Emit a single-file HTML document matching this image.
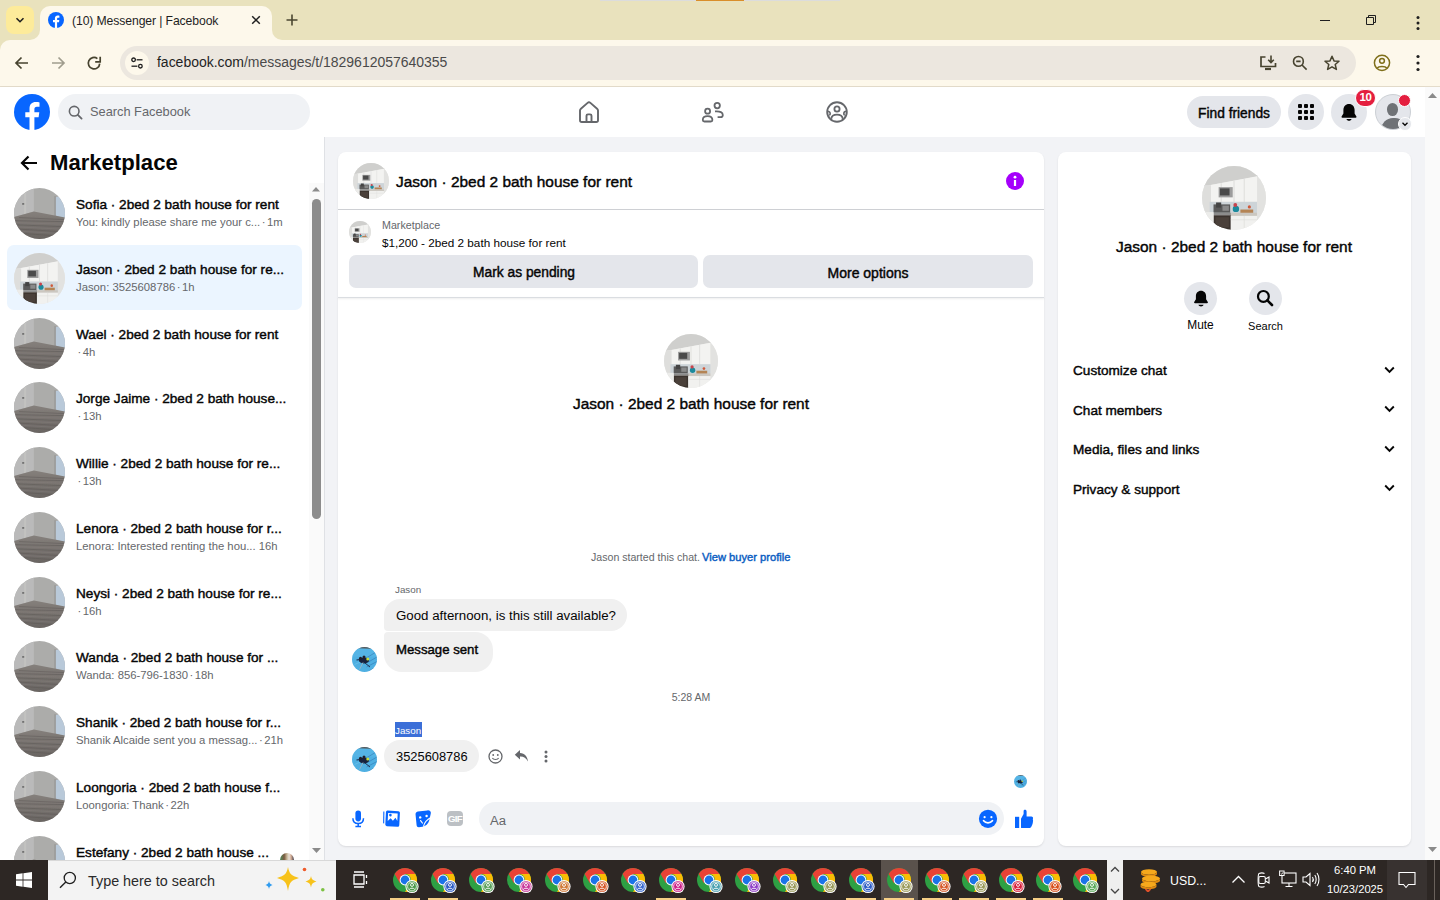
<!DOCTYPE html>
<html><head><meta charset="utf-8">
<style>
*{box-sizing:border-box;margin:0;padding:0}
html,body{width:1440px;height:900px;overflow:hidden;font-family:"Liberation Sans",sans-serif;background:#fff;color:#050505}
.abs{position:absolute}
#tabs{left:0;top:0;width:1440px;height:50px;background:#e9e2bd}
#toolbar{left:0;top:40px;width:1440px;height:47px;background:#fdf8eb;border-bottom:1px solid #e4dccb;border-top-left-radius:10px}
#fbhead{left:0;top:87px;width:1425px;height:50px;background:#fff;box-shadow:0 1px 2px rgba(0,0,0,0.12)}
#page{left:0;top:137px;width:1425px;height:723px;background:#f2f3f6}
#pscroll{left:1425px;top:87px;width:15px;height:773px;background:#fafafa}
#side{left:0;top:137px;width:325px;height:723px;background:#fff;border-right:1px solid #dfe1e5}
#chat{left:338px;top:152px;width:706px;height:694px;background:#fff;border-radius:8px;box-shadow:0 1px 2px rgba(0,0,0,0.1)}
#info{left:1058px;top:152px;width:353px;height:694px;background:#fff;border-radius:8px;box-shadow:0 1px 2px rgba(0,0,0,0.1)}
.tt{left:76px;font-size:13.62px;line-height:1;font-weight:400;-webkit-text-stroke-width:0.42px;color:#050505;white-space:nowrap}
.st{left:76px;font-size:11.3px;color:#65676b;white-space:pre}
#taskbar{left:0;top:860px;width:1440px;height:40px;background:#2d2724}
</style></head><body>
<svg width="0" height="0" style="position:absolute">
<defs>
<clipPath id="cc"><circle cx="50" cy="50" r="50"/></clipPath>
<symbol id="room" viewBox="0 0 100 100">
<defs><linearGradient id="flg" x1="0" y1="0" x2="0" y2="1"><stop offset="0" stop-color="#85807c"/><stop offset="1" stop-color="#6a6562"/></linearGradient></defs>
<g clip-path="url(#cc)">
<rect width="100" height="100" fill="#acacaa"/>
<polygon points="0,0 39,0 39,46 0,57" fill="#bababa"/>
<rect x="20" y="0" width="4" height="52" fill="#c2c2c0"/>
<polygon points="81,18 100,14 100,60 81,54" fill="#b9c9d9"/>
<rect x="79" y="16" width="3" height="40" fill="#9a9a98"/>
<polygon points="0,57 39,46 100,58 100,100 0,100" fill="url(#flg)"/>
<path d="M0 64 L100 66 M0 72 L100 76 M0 80 L100 86 M0 88 L100 95 M10 58 L100 62" stroke="#5a5552" stroke-width="1.6" opacity="0.55"/>
<path d="M0 68 L100 71 M0 76 L100 81 M0 84 L100 90" stroke="#8c8783" stroke-width="1.2" opacity="0.5"/>
<rect x="16" y="30" width="4" height="2.5" fill="#555"/>
</g>
</symbol>
<symbol id="kitchen" viewBox="0 0 100 100">
<g clip-path="url(#cc)">
<rect width="100" height="100" fill="#e9e9e7"/>
<polygon points="0,0 100,0 100,14 0,32" fill="#cfcfcd"/>
<polygon points="12,30 86,16 86,56 12,56" fill="#f3f3f1"/>
<path d="M30 27 V56 M50 23 V56 M66 20 V56" stroke="#d6d6d4" stroke-width="1.2"/>
<rect x="26" y="33" width="22" height="16" fill="#9c9c9c"/>
<rect x="28" y="35" width="15" height="11" fill="#4a4a4a"/>
<rect x="0" y="30" width="14" height="70" fill="#dededc"/>
<rect x="12" y="56" width="76" height="18" fill="#cdd4d8"/>
<rect x="18" y="60" width="26" height="13" fill="#5a5a5a"/>
<rect x="22" y="57" width="8" height="8" fill="#444"/>
<rect x="32" y="62" width="10" height="8" fill="#8a8a8a"/>
<circle cx="53" cy="67" r="5" fill="#1b8a9c"/>
<circle cx="52" cy="61" r="3" fill="#c8434c"/>
<rect x="60" y="68" width="20" height="6" fill="#b48454"/>
<circle cx="74" cy="64" r="2.5" fill="#d05a3a"/>
<rect x="44" y="73" width="44" height="5" fill="#cbc7c0"/>
<rect x="18" y="73" width="27" height="4" fill="#8c8c8c"/>
<rect x="18" y="77" width="27" height="25" fill="#3b332e"/>
<rect x="21" y="80" width="21" height="16" fill="#4a403a"/>
<rect x="45" y="78" width="43" height="24" fill="#f1f1ef"/>
<path d="M66 78 V100 M45 84 H88" stroke="#dcdcda" stroke-width="1"/>
<rect x="86" y="14" width="14" height="88" fill="#e2e2e0"/>
<rect x="0" y="72" width="18" height="30" fill="#ececea"/>
</g>
</symbol>
<symbol id="pool" viewBox="0 0 100 100">
<g clip-path="url(#cc)">
<rect width="100" height="100" fill="#4fb0e2"/>
<polygon points="0,0 100,0 100,8 0,4" fill="#5a5a5a"/>
<rect x="0" y="8" width="100" height="30" fill="#5ab8e8" opacity="0.6"/>
<path d="M55 45 L100 18 M62 62 L100 40 M58 80 L100 58 M70 95 L100 78" stroke="#2b6aa8" stroke-width="3.5" opacity="0.55"/>
<path d="M10 70 L45 55" stroke="#7ac8ee" stroke-width="3" opacity="0.7"/>
<ellipse cx="48" cy="54" rx="20" ry="12" fill="#17223f"/>
<circle cx="34" cy="45" r="6" fill="#1f1f2c"/>
<circle cx="48" cy="40" r="6" fill="#23202a"/>
<circle cx="63" cy="48" r="6" fill="#c9dc3a"/>
<path d="M44 62 L30 90" stroke="#8fb3c4" stroke-width="4"/>
<path d="M18 52 L34 50" stroke="#17223f" stroke-width="5"/>
<path d="M52 64 L72 80" stroke="#203050" stroke-width="4"/>
</g>
</symbol>
</defs></svg>

<div id="tabs" class="abs">
  <div class="abs" style="left:6px;top:6px;width:28px;height:28px;border-radius:8px;background:#fdeb9a;z-index:2"></div>
  <svg class="abs" style="left:14px;top:14px;z-index:3" width="12" height="12" viewBox="0 0 12 12"><path d="M2.5 4.2 L6 7.7 L9.5 4.2" fill="none" stroke="#1f1f1f" stroke-width="1.6"/></svg>
  <div class="abs" style="left:40px;top:6px;width:232px;height:34px;background:#fdf8eb;border-radius:10px 10px 0 0"></div>
  <div class="abs" style="left:30px;top:30px;width:10px;height:10px;background:#fdf8eb"></div><div class="abs" style="left:30px;top:29px;width:10px;height:11px;background:#e9e2bd;border-bottom-right-radius:10px"></div>
  <div class="abs" style="left:272px;top:30px;width:10px;height:10px;background:#fdf8eb"></div><div class="abs" style="left:272px;top:29px;width:10px;height:11px;background:#e9e2bd;border-bottom-left-radius:10px"></div>
  <svg class="abs" style="left:48px;top:12px" width="16" height="16" viewBox="0 0 16 16"><circle cx="8" cy="8" r="8" fill="#0866ff"/><path d="M9.1 16 V10.3 H11 L11.3 8.1 H9.1 V6.8 C9.1 6.1 9.4 5.7 10.2 5.7 H11.4 V3.7 C11.1 3.7 10.4 3.6 9.7 3.6 C8 3.6 6.9 4.6 6.9 6.5 V8.1 H5 V10.3 H6.9 V16 Z" fill="#fff"/></svg>
  <div class="abs" style="left:72px;top:13.5px;font-size:12.2px;color:#1f1f1f;white-space:nowrap;letter-spacing:-0.1px">(10) Messenger | Facebook</div>
  <svg class="abs" style="left:250px;top:14px" width="12" height="12" viewBox="0 0 12 12"><path d="M2.2 2.2 L9.8 9.8 M9.8 2.2 L2.2 9.8" stroke="#1f1f1f" stroke-width="1.5"/></svg>
  <svg class="abs" style="left:285px;top:13px" width="14" height="14" viewBox="0 0 14 14"><path d="M7 1.5 V12.5 M1.5 7 H12.5" stroke="#4a4630" stroke-width="1.6"/></svg>
  <svg class="abs" style="left:1318px;top:13px" width="14" height="14" viewBox="0 0 14 14"><path d="M2 7.5 H12" stroke="#1f1f1f" stroke-width="1"/></svg>
  <svg class="abs" style="left:1364px;top:13px" width="14" height="14" viewBox="0 0 14 14"><path d="M2.5 4.5 H9.5 V11.5 H2.5 Z M4.5 4.5 V2.5 H11.5 V9.5 H9.5" fill="none" stroke="#1f1f1f" stroke-width="1"/></svg>
  <svg class="abs" style="left:1410px;top:13px" width="16" height="20" viewBox="0 0 16 20"><circle cx="8" cy="4.5" r="1.5" fill="#1f1f1f"/><circle cx="8" cy="10" r="1.5" fill="#1f1f1f"/><circle cx="8" cy="15.5" r="1.5" fill="#1f1f1f"/></svg>
  <div class="abs" style="left:600px;top:0;width:240px;height:1px;background:#dcdcdc"></div>
  <div class="abs" style="left:696px;top:0;width:48px;height:1px;background:#d98e2b"></div>
</div>
<div id="toolbar" class="abs">
  <svg class="abs" style="left:13px;top:14px" width="18" height="18" viewBox="0 0 18 18"><path d="M15 9 H3.5 M8.5 3.5 L3 9 L8.5 14.5" fill="none" stroke="#47432f" stroke-width="1.7"/></svg>
  <svg class="abs" style="left:49px;top:14px" width="18" height="18" viewBox="0 0 18 18"><path d="M3 9 H14.5 M9.5 3.5 L15 9 L9.5 14.5" fill="none" stroke="#a09d8e" stroke-width="1.7"/></svg>
  <svg class="abs" style="left:85px;top:14px" width="18" height="18" viewBox="0 0 18 18"><path d="M14.7 9.6 A5.7 5.7 0 1 1 12.4 4.6" fill="none" stroke="#47432f" stroke-width="1.7"/><path d="M15.2 2.8 V7.9 H10.2" fill="none" stroke="#47432f" stroke-width="1.7"/></svg>
  <div class="abs" style="left:120px;top:6px;width:1236px;height:34px;border-radius:17px;background:#ece7df"></div>
  <div class="abs" style="left:125px;top:11px;width:24px;height:24px;border-radius:12px;background:#fdf8eb"></div>
  <svg class="abs" style="left:130px;top:16px" width="14" height="14" viewBox="0 0 14 14"><circle cx="3.6" cy="3.8" r="1.8" fill="none" stroke="#1f1f1f" stroke-width="1.3"/><path d="M6.6 3.8 H12.5" stroke="#1f1f1f" stroke-width="1.3"/><circle cx="10.4" cy="10.2" r="1.8" fill="none" stroke="#1f1f1f" stroke-width="1.3"/><path d="M1.5 10.2 H7.4" stroke="#1f1f1f" stroke-width="1.3"/></svg>
  <div class="abs" style="left:157px;top:14px;font-size:14px;color:#1f1f1f;white-space:nowrap;letter-spacing:-0.02px"><span>facebook.com</span><span style="color:#4a4a4a">/messages/t/1829612057640355</span></div>
  <svg class="abs" style="left:1258px;top:14px" width="20" height="18" viewBox="0 0 20 18"><path d="M7.5 3 H3 V12.5 H17.5 V9" fill="none" stroke="#47432f" stroke-width="1.7"/><path d="M7 15 H13" stroke="#47432f" stroke-width="2.2"/><path d="M13 1.5 V8.5 M10.2 5.8 L13 8.6 L15.8 5.8" fill="none" stroke="#47432f" stroke-width="1.6"/></svg>
  <svg class="abs" style="left:1291px;top:14px" width="18" height="18" viewBox="0 0 18 18"><circle cx="7.4" cy="7.4" r="4.9" fill="none" stroke="#47432f" stroke-width="1.6"/><path d="M11 11 L15.6 15.6 M5.2 7.4 H9.6" stroke="#47432f" stroke-width="1.6"/></svg>
  <svg class="abs" style="left:1322px;top:13px" width="20" height="20" viewBox="0 0 20 20"><path d="M10 3.2 L12 7.9 L17 8.3 L13.2 11.5 L14.4 16.4 L10 13.8 L5.6 16.4 L6.8 11.5 L3 8.3 L8 7.9 Z" fill="none" stroke="#47432f" stroke-width="1.5" stroke-linejoin="round"/></svg>
  <svg class="abs" style="left:1371px;top:12px" width="22" height="22" viewBox="0 0 22 22"><circle cx="11" cy="10.8" r="7.6" fill="none" stroke="#7f6f1a" stroke-width="1.5"/><circle cx="11" cy="8.8" r="2.4" fill="none" stroke="#7f6f1a" stroke-width="1.5"/><path d="M6.3 16.2 C7.6 13.8 14.4 13.8 15.7 16.2" fill="none" stroke="#7f6f1a" stroke-width="1.5"/></svg>
  <svg class="abs" style="left:1410px;top:13px" width="16" height="20" viewBox="0 0 16 20"><circle cx="8" cy="3.5" r="1.6" fill="#1f1f1f"/><circle cx="8" cy="10" r="1.6" fill="#1f1f1f"/><circle cx="8" cy="16.5" r="1.6" fill="#1f1f1f"/></svg>
</div>
<div id="fbhead" class="abs">
  <svg class="abs" style="left:14px;top:7px" width="36" height="36" viewBox="0 0 36 36"><circle cx="18" cy="18" r="18" fill="#0866ff"/><path d="M20.4 36 V23.2 H24.6 L25.3 18.2 H20.4 V15.3 C20.4 13.8 21 12.8 22.9 12.8 H25.5 V8.4 C24.9 8.3 23.3 8.1 21.8 8.1 C17.9 8.1 15.5 10.4 15.5 14.6 V18.2 H11.3 V23.2 H15.5 V36 Z" fill="#fff"/></svg>
  <div class="abs" style="left:58px;top:7px;width:252px;height:36px;border-radius:18px;background:#f0f2f5"></div>
  <svg class="abs" style="left:68px;top:18px" width="15" height="15" viewBox="0 0 15 15"><circle cx="6.2" cy="6.2" r="4.8" fill="none" stroke="#65676b" stroke-width="1.6"/><path d="M9.8 9.8 L13.6 13.6" stroke="#65676b" stroke-width="1.8" stroke-linecap="round"/></svg>
  <div class="abs" style="left:90px;top:17px;font-size:12.8px;color:#65676b;white-space:nowrap">Search Facebook</div>
  <svg class="abs" style="left:578px;top:14px" width="22" height="22" viewBox="0 0 22 22"><path d="M2 9.5 C2 8.8 2.3 8.2 2.9 7.7 L9.6 1.9 C10.4 1.2 11.6 1.2 12.4 1.9 L19.1 7.7 C19.7 8.2 20 8.8 20 9.5 V19.2 C20 20.2 19.2 21 18.2 21 H3.8 C2.8 21 2 20.2 2 19.2 Z" fill="none" stroke="#65676b" stroke-width="1.9"/><path d="M8.5 21 V14.8 C8.5 14 9.1 13.4 9.9 13.4 H12.1 C12.9 13.4 13.5 14 13.5 14.8 V21" fill="none" stroke="#65676b" stroke-width="1.9"/></svg>
  <svg class="abs" style="left:701px;top:14px" width="24" height="22" viewBox="0 0 24 22"><circle cx="6.6" cy="10.2" r="2.5" fill="none" stroke="#65676b" stroke-width="1.8"/><path d="M1.8 19 C1.8 16.3 3.4 15.2 6.6 15.2 C9.8 15.2 11.4 16.3 11.4 19 C11.4 20 10.8 20.5 9.8 20.5 H3.4 C2.4 20.5 1.8 20 1.8 19 Z" fill="none" stroke="#65676b" stroke-width="1.8"/><circle cx="16.2" cy="4.6" r="2.7" fill="none" stroke="#65676b" stroke-width="1.8"/><path d="M14 10.4 C19.4 10 21.8 11.4 21.8 14 C21.8 15.6 21 16.2 19.6 16.2 H16.6" fill="none" stroke="#65676b" stroke-width="1.8"/></svg>
  <svg class="abs" style="left:826px;top:14px" width="22" height="22" viewBox="0 0 22 22"><circle cx="11" cy="11" r="9.8" fill="none" stroke="#65676b" stroke-width="1.9"/><circle cx="11" cy="8" r="2.6" fill="none" stroke="#65676b" stroke-width="1.8"/><path d="M5.2 17.8 C5.6 14.8 7.6 13.6 11 13.6 C14.4 13.6 16.4 14.8 16.8 17.8" fill="none" stroke="#65676b" stroke-width="1.8"/><path d="M1.5 10.3 C2.8 10.3 4.2 11.2 4.2 12.7 C4.2 13.4 3.8 14 3.3 14.3 M20.5 10.3 C19.2 10.3 17.8 11.2 17.8 12.7 C17.8 13.4 18.2 14 18.7 14.3" fill="none" stroke="#65676b" stroke-width="1.6"/></svg>
  <div class="abs" style="left:1187px;top:9px;width:94px;height:32px;border-radius:16px;background:#e4e6eb"></div>
  <div class="abs" style="left:1187px;top:11px;width:94px;height:32px;line-height:32px;text-align:center;font-size:13.78px;font-weight:400;-webkit-text-stroke-width:0.42px;color:#050505">Find friends</div>
  <div class="abs" style="left:1288px;top:7px;width:36px;height:36px;border-radius:18px;background:#e4e6eb"></div>
  <svg class="abs" style="left:1297px;top:16px" width="18" height="18" viewBox="0 0 18 18"><g fill="#050505"><rect x="1" y="1" width="4" height="4" rx="1"/><rect x="7" y="1" width="4" height="4" rx="1"/><rect x="13" y="1" width="4" height="4" rx="1"/><rect x="1" y="7" width="4" height="4" rx="1"/><rect x="7" y="7" width="4" height="4" rx="1"/><rect x="13" y="7" width="4" height="4" rx="1"/><rect x="1" y="13" width="4" height="4" rx="1"/><rect x="7" y="13" width="4" height="4" rx="1"/><rect x="13" y="13" width="4" height="4" rx="1"/></g></svg>
  <div class="abs" style="left:1331px;top:7px;width:36px;height:36px;border-radius:18px;background:#e4e6eb"></div>
  <svg class="abs" style="left:1340px;top:16px" width="18" height="18" viewBox="0 0 18 18"><path d="M9 1 C5.6 1 3.4 3.6 3.4 7 V10.6 L1.6 13.6 C1.3 14.2 1.6 14.8 2.3 14.8 H15.7 C16.4 14.8 16.7 14.2 16.4 13.6 L14.6 10.6 V7 C14.6 3.6 12.4 1 9 1 Z" fill="#050505"/><path d="M6.4 16 C6.8 17.2 7.8 17.8 9 17.8 C10.2 17.8 11.2 17.2 11.6 16 Z" fill="#050505"/></svg>
  <div class="abs" style="left:1355px;top:2px;width:21px;height:18px;border-radius:9px;background:#e41e3f;border:1.5px solid #fff;color:#fff;font-size:11.5px;font-weight:bold;text-align:center;line-height:15px;letter-spacing:-0.5px">10</div>
  <div class="abs" style="left:1375px;top:7px;width:36px;height:36px;border-radius:18px;background:#e4e6eb;overflow:hidden;border:1px solid #ccd0d5">
    <div class="abs" style="left:11.4px;top:8px;width:11px;height:12.7px;border-radius:50%;background:#6f7276"></div>
    <div class="abs" style="left:4.7px;top:23px;width:26px;height:20px;border-radius:12px 12px 0 0;background:#6f7276"></div>
  </div>
  <div class="abs" style="left:1398px;top:7px;width:13px;height:13px;border-radius:7px;background:#e41e3f;border:1.5px solid #fff"></div>
  <div class="abs" style="left:1398px;top:30px;width:14px;height:14px;border-radius:7px;background:#e4e6eb;border:1.5px solid #fff"></div>
  <svg class="abs" style="left:1401px;top:33px" width="8" height="8" viewBox="0 0 8 8"><path d="M1.5 2.8 L4 5.3 L6.5 2.8" fill="none" stroke="#050505" stroke-width="1.3"/></svg>
</div>
<div id="page" class="abs"></div>
<div id="pscroll" class="abs"></div>
<svg class="abs" style="left:1427px;top:91px" width="11" height="8" viewBox="0 0 11 8"><path d="M1 7 L5.5 2 L10 7 Z" fill="#8a8a8a"/></svg>
<svg class="abs" style="left:1427px;top:846px" width="11" height="8" viewBox="0 0 11 8"><path d="M1 1 L5.5 6 L10 1 Z" fill="#8a8a8a"/></svg>
<div id="side" class="abs">
<svg class="abs" style="left:20px;top:18px" width="18" height="16" viewBox="0 0 18 16"><path d="M17 8 H2.5 M8.5 1.5 L2 8 L8.5 14.5" fill="none" stroke="#050505" stroke-width="2.2"/></svg>
<div class="abs" style="left:50px;top:13px;font-size:22.1px;font-weight:bold;color:#050505;white-space:nowrap;letter-spacing:0px">Marketplace</div>
<div class="abs" style="left:7px;top:108px;width:295px;height:65px;border-radius:7px;background:#ebf5ff"></div>
<svg class="abs" style="left:14px;top:51.00px" width="51" height="51"><use href="#room"/></svg>
<div class="abs tt" style="top:61.00px">Sofia · 2bed 2 bath house for rent</div>
<div class="abs st" style="top:79.00px">You: kindly please share me your c...<span style="margin:0 1.5px">·</span>1m</div>
<svg class="abs" style="left:14px;top:115.75px" width="51" height="51"><use href="#kitchen"/></svg>
<div class="abs tt" style="top:125.75px">Jason · 2bed 2 bath house for re...</div>
<div class="abs st" style="top:143.75px">Jason: 3525608786<span style="margin:0 1.5px">·</span>1h</div>
<svg class="abs" style="left:14px;top:180.50px" width="51" height="51"><use href="#room"/></svg>
<div class="abs tt" style="top:190.50px">Wael · 2bed 2 bath house for rent</div>
<div class="abs st" style="top:208.50px"><span style="margin:0 1.5px">·</span>4h</div>
<svg class="abs" style="left:14px;top:245.25px" width="51" height="51"><use href="#room"/></svg>
<div class="abs tt" style="top:255.25px">Jorge Jaime · 2bed 2 bath house...</div>
<div class="abs st" style="top:273.25px"><span style="margin:0 1.5px">·</span>13h</div>
<svg class="abs" style="left:14px;top:310.00px" width="51" height="51"><use href="#room"/></svg>
<div class="abs tt" style="top:320.00px">Willie · 2bed 2 bath house for re...</div>
<div class="abs st" style="top:338.00px"><span style="margin:0 1.5px">·</span>13h</div>
<svg class="abs" style="left:14px;top:374.75px" width="51" height="51"><use href="#room"/></svg>
<div class="abs tt" style="top:384.75px">Lenora · 2bed 2 bath house for r...</div>
<div class="abs st" style="top:402.75px">Lenora: Interested renting the hou... 16h</div>
<svg class="abs" style="left:14px;top:439.50px" width="51" height="51"><use href="#room"/></svg>
<div class="abs tt" style="top:449.50px">Neysi · 2bed 2 bath house for re...</div>
<div class="abs st" style="top:467.50px"><span style="margin:0 1.5px">·</span>16h</div>
<svg class="abs" style="left:14px;top:504.25px" width="51" height="51"><use href="#room"/></svg>
<div class="abs tt" style="top:514.25px">Wanda · 2bed 2 bath house for ...</div>
<div class="abs st" style="top:532.25px">Wanda: 856-796-1830<span style="margin:0 1.5px">·</span>18h</div>
<svg class="abs" style="left:14px;top:569.00px" width="51" height="51"><use href="#room"/></svg>
<div class="abs tt" style="top:579.00px">Shanik · 2bed 2 bath house for r...</div>
<div class="abs st" style="top:597.00px">Shanik Alcaide sent you a messag...<span style="margin:0 1.5px">·</span>21h</div>
<svg class="abs" style="left:14px;top:633.75px" width="51" height="51"><use href="#room"/></svg>
<div class="abs tt" style="top:643.75px">Loongoria · 2bed 2 bath house f...</div>
<div class="abs st" style="top:661.75px">Loongoria: Thank<span style="margin:0 1.5px">·</span>22h</div>
<svg class="abs" style="left:14px;top:698.50px" width="51" height="51"><use href="#room"/></svg>
<div class="abs tt" style="top:708.50px">Estefany · 2bed 2 bath house ...</div>
<div class="abs" style="left:309px;top:46px;width:15px;height:677px;background:#fafafa"></div>
<svg class="abs" style="left:311px;top:710px" width="11" height="7" viewBox="0 0 11 7"><path d="M1 1 L5.5 6 L10 1 Z" fill="#8a8a8a"/></svg>
<div class="abs" style="left:280px;top:716px;width:14px;height:14px;border-radius:7px;overflow:hidden;background:linear-gradient(90deg,#4a8a5a 0,#7a5a40 30%,#c8b89a 50%,#e8e0d8 65%,#d0a890 80%,#3a3a4a 100%)"></div>
<svg class="abs" style="left:311px;top:48px" width="10" height="8" viewBox="0 0 10 8"><path d="M1 6.5 L5 2 L9 6.5 Z" fill="#8c8c8c"/></svg>
<div class="abs" style="left:312px;top:62px;width:9px;height:320px;border-radius:5px;background:#8c8c8c"></div>
</div>
<div id="chat" class="abs"></div>
<div id="info" class="abs"></div>
<svg class="abs" style="left:353px;top:163px" width="36" height="36"><use href="#kitchen"/></svg>
<div class="abs" style="left:396px;top:173.93px;font-size:15.44px;line-height:1;font-weight:400;-webkit-text-stroke-width:0.42px;color:#050505;white-space:pre;">Jason · 2bed 2 bath house for rent</div>
<svg class="abs" style="left:1006px;top:172px" width="18" height="18" viewBox="0 0 18 18"><circle cx="9" cy="9" r="9" fill="#a500fb"/><circle cx="9" cy="5.2" r="1.4" fill="#fff"/><rect x="7.9" y="8" width="2.2" height="6" fill="#fff"/></svg>
<div class="abs" style="left:338px;top:209px;width:706px;height:1px;background:#ced0d4"></div>
<svg class="abs" style="left:349px;top:221px" width="22" height="22"><use href="#kitchen"/></svg>
<div class="abs" style="left:382px;top:219.94px;font-size:10.7px;line-height:1;font-weight:400;color:#65676b;white-space:pre;">Marketplace</div>
<div class="abs" style="left:382px;top:237.08px;font-size:11.72px;line-height:1;font-weight:400;color:#050505;white-space:pre;">$1,200 - 2bed 2 bath house for rent</div>
<div class="abs" style="left:349px;top:255px;width:349px;height:33px;border-radius:7px;background:#e4e6eb"></div>
<div class="abs" style="left:224px;width:600px;text-align:center;top:266.31px;font-size:13.8px;line-height:1;font-weight:400;-webkit-text-stroke-width:0.42px;color:#050505;white-space:pre;">Mark as pending</div>
<div class="abs" style="left:703px;top:255px;width:330px;height:33px;border-radius:7px;background:#e4e6eb"></div>
<div class="abs" style="left:568px;width:600px;text-align:center;top:266.15px;font-size:14.0px;line-height:1;font-weight:400;-webkit-text-stroke-width:0.42px;color:#050505;white-space:pre;">More options</div>
<div class="abs" style="left:338px;top:297px;width:706px;height:1px;background:#dadde1;box-shadow:0 1px 2px rgba(0,0,0,0.1)"></div>
<svg class="abs" style="left:664px;top:334px" width="54" height="54"><use href="#kitchen"/></svg>
<div class="abs" style="left:391px;width:600px;text-align:center;top:395.93px;font-size:15.44px;line-height:1;font-weight:400;-webkit-text-stroke-width:0.42px;color:#050505;white-space:pre;">Jason · 2bed 2 bath house for rent</div>
<div class="abs" style="left:591px;top:552.03px;font-size:10.6px;line-height:1;font-weight:400;color:#65676b;white-space:pre;">Jason started this chat. </div>
<div class="abs" style="left:702px;top:551.55px;font-size:11.17px;line-height:1;font-weight:400;-webkit-text-stroke-width:0.42px;color:#0a5dc2;white-space:pre;">View buyer profile</div>
<div class="abs" style="left:395px;top:584.70px;font-size:9.8px;line-height:1;font-weight:400;color:#65676b;white-space:pre;">Jason</div>
<div class="abs" style="left:384px;top:599px;width:243px;height:32px;border-radius:16px 16px 16px 4px;background:#f0f0f0"></div>
<div class="abs" style="left:396px;top:608.75px;font-size:13.29px;line-height:1;font-weight:400;color:#050505;white-space:pre;">Good afternoon, is this still available?</div>
<div class="abs" style="left:384px;top:632px;width:109px;height:40px;border-radius:4px 18px 18px 18px;background:#f0f0f0"></div>
<div class="abs" style="left:396px;top:642.83px;font-size:13.19px;line-height:1;font-weight:400;-webkit-text-stroke-width:0.42px;color:#050505;white-space:pre;">Message sent</div>
<svg class="abs" style="left:352px;top:647px" width="25" height="25"><use href="#pool"/></svg>
<div class="abs" style="left:391px;width:600px;text-align:center;top:692.09px;font-size:10.52px;line-height:1;font-weight:400;color:#65676b;white-space:pre;">5:28 AM</div>
<div class="abs" style="left:395px;top:722px;width:27px;height:15px;background:#3b6fd8"></div>
<div class="abs" style="left:395px;top:725.70px;font-size:9.8px;line-height:1;font-weight:400;color:#ffffff;white-space:pre;">Jason</div>
<div class="abs" style="left:384px;top:740px;width:95px;height:32px;border-radius:16px;background:#f0f0f0"></div>
<div class="abs" style="left:396px;top:751.09px;font-size:12.89px;line-height:1;font-weight:400;color:#050505;white-space:pre;">3525608786</div>
<svg class="abs" style="left:352px;top:747px" width="25" height="25"><use href="#pool"/></svg>
<svg class="abs" style="left:488px;top:749px" width="15" height="15" viewBox="0 0 15 15"><circle cx="7.5" cy="7.5" r="6.5" fill="none" stroke="#65676b" stroke-width="1.3"/><circle cx="5.2" cy="6" r="0.9" fill="#65676b"/><circle cx="9.8" cy="6" r="0.9" fill="#65676b"/><path d="M4.4 9 C5.4 11 9.6 11 10.6 9" fill="none" stroke="#65676b" stroke-width="1.2"/></svg>
<svg class="abs" style="left:514px;top:749px" width="15" height="14" viewBox="0 0 15 14"><path d="M6 1 L0.8 5.8 L6 10.6 V7.6 C9.5 7.4 12 8.8 14 12.5 C13.5 7.5 10.8 4.2 6 3.9 Z" fill="#65676b"/></svg>
<svg class="abs" style="left:543px;top:750px" width="6" height="13" viewBox="0 0 6 13"><circle cx="3" cy="2" r="1.5" fill="#65676b"/><circle cx="3" cy="6.5" r="1.5" fill="#65676b"/><circle cx="3" cy="11" r="1.5" fill="#65676b"/></svg>
<svg class="abs" style="left:1014px;top:775px" width="13" height="13"><use href="#pool"/></svg>
<svg class="abs" style="left:351px;top:810px" width="14" height="18" viewBox="0 0 14 18"><rect x="4.4" y="0.6" width="5.6" height="10.8" rx="2.8" fill="#0866ff"/><path d="M1.9 8.2 C1.9 11.6 4.2 13.6 7.2 13.6 C10.2 13.6 12.5 11.6 12.5 8.2" fill="none" stroke="#0866ff" stroke-width="1.5"/><path d="M7.2 13.6 V16.4 M4.4 16.6 H10" stroke="#0866ff" stroke-width="1.5"/></svg>
<svg class="abs" style="left:382px;top:810px" width="18" height="18" viewBox="0 0 18 18"><path d="M1.3 1.6 L2.4 1.4 L2.2 13.4 L1.1 13.2 Z" fill="#0866ff"/><g transform="rotate(3 10 9)"><rect x="3.6" y="0.8" width="14" height="15.6" rx="1.6" fill="#0866ff"/><path d="M5.8 3.2 H15.4 V10.6 L13.4 7.6 L11 10.8 L8.6 8.2 L5.8 11.2 Z" fill="#fff"/><circle cx="8.2" cy="5.2" r="1.3" fill="#0866ff"/></g></svg>
<svg class="abs" style="left:414px;top:810px" width="18" height="18" viewBox="0 0 18 18"><path d="M1.6 5 C1.2 3.2 2.2 2 3.8 1.6 L13.4 0.4 C15.6 0.1 17.4 1.6 16.8 3.6 L15.2 10.4 C14.4 13.6 11.6 16.2 8.4 16.8 L5 17.2 C3.6 17.3 2.8 16.4 2.6 15.2 Z" fill="#0866ff"/><circle cx="6.2" cy="7.4" r="1.2" fill="#fff"/><circle cx="12.6" cy="6" r="1.2" fill="#fff"/><path d="M6.6 10.6 L8.4 13" stroke="#fff" stroke-width="1.2" stroke-linecap="round"/><path d="M9.4 16.6 C10.4 12.8 13 9.6 17 7.6" fill="none" stroke="#fff" stroke-width="1.1"/></svg>
<div class="abs" style="left:447px;top:811px;width:16px;height:15px;border-radius:4px;background:#bcc0c4"></div>
<div class="abs" style="left:445px;top:812.5px;width:20px;text-align:center;font-size:9.6px;font-weight:bold;line-height:12px;color:#fff;letter-spacing:-0.7px">GIF</div>
<div class="abs" style="left:479px;top:802px;width:525px;height:33px;border-radius:17px;background:#f0f2f5"></div>
<div class="abs" style="left:490px;top:813.93px;font-size:13.08px;line-height:1;font-weight:400;color:#65676b;white-space:pre;">Aa</div>
<svg class="abs" style="left:978px;top:809px" width="20" height="20" viewBox="0 0 20 20"><circle cx="10" cy="9.8" r="9.1" fill="#0866ff"/><circle cx="6.6" cy="8.2" r="1.1" fill="#fff"/><circle cx="13.4" cy="8.2" r="1.1" fill="#fff"/><path d="M5.6 11.8 C7.8 14.6 12.2 14.6 14.4 11.8" fill="none" stroke="#fff" stroke-width="1.8" stroke-linecap="round"/></svg>
<svg class="abs" style="left:1014px;top:809px" width="20" height="20" viewBox="0 0 20 20"><rect x="1" y="7.8" width="4.2" height="11.2" fill="#0866ff"/><path d="M7 18.4 V9.8 L9.6 5 V2.2 C9.6 1.3 10.2 0.8 11 0.8 C11.9 0.8 12.6 1.4 12.6 2.6 V7.4 H17.4 C18.4 7.4 19.2 8.2 19 9.2 L18.8 10.8 C19.2 11.4 19.2 12.4 18.8 13 C19 13.6 18.9 14.4 18.4 14.9 C18.4 15.6 18.2 16.4 17.6 16.9 C17.2 18.2 16.4 19 15 19 H7.8 C7.3 19 7 18.8 7 18.4 Z" fill="#0866ff"/></svg>
<svg class="abs" style="left:1202px;top:166px" width="64" height="64"><use href="#kitchen"/></svg>
<div class="abs" style="left:934px;width:600px;text-align:center;top:238.93px;font-size:15.44px;line-height:1;font-weight:400;-webkit-text-stroke-width:0.42px;color:#050505;white-space:pre;">Jason · 2bed 2 bath house for rent</div>
<div class="abs" style="left:1184px;top:282px;width:33px;height:33px;border-radius:17px;background:#e4e6eb"></div>
<svg class="abs" style="left:1193px;top:290px" width="16" height="17" viewBox="0 0 16 17"><path d="M8 0.8 C4.9 0.8 2.9 3.2 2.9 6.2 V9.2 L1.2 12 C0.9 12.6 1.2 13.2 1.9 13.2 H14.1 C14.8 13.2 15.1 12.6 14.8 12 L13.1 9.2 V6.2 C13.1 3.2 11.1 0.8 8 0.8 Z" fill="#050505"/><path d="M5.4 14.8 C5.8 15.8 6.8 16.4 8 16.4 C9.2 16.4 10.2 15.8 10.6 14.8 Z" fill="#050505"/></svg>
<div class="abs" style="left:1249px;top:282px;width:33px;height:33px;border-radius:17px;background:#e4e6eb"></div>
<svg class="abs" style="left:1256px;top:289px" width="18" height="18" viewBox="0 0 18 18"><circle cx="7.4" cy="7.4" r="5.4" fill="none" stroke="#050505" stroke-width="2.2"/><path d="M11.4 11.4 L16 16" stroke="#050505" stroke-width="2.6" stroke-linecap="round"/></svg>
<div class="abs" style="left:900.5px;width:600px;text-align:center;top:319.91px;font-size:11.92px;line-height:1;font-weight:400;color:#050505;white-space:pre;">Mute</div>
<div class="abs" style="left:965.5px;width:600px;text-align:center;top:320.69px;font-size:11.0px;line-height:1;font-weight:400;color:#050505;white-space:pre;">Search</div>
<div class="abs" style="left:1073px;top:364.49px;font-size:13.6px;line-height:1;font-weight:400;-webkit-text-stroke-width:0.42px;color:#050505;white-space:pre;">Customize chat</div>
<svg class="abs" style="left:1384px;top:365.5px" width="11" height="8" viewBox="0 0 11 8"><path d="M1.2 1.5 L5.5 5.8 L9.8 1.5" fill="none" stroke="#050505" stroke-width="1.9"/></svg>
<div class="abs" style="left:1073px;top:403.99px;font-size:13.6px;line-height:1;font-weight:400;-webkit-text-stroke-width:0.42px;color:#050505;white-space:pre;">Chat members</div>
<svg class="abs" style="left:1384px;top:405.0px" width="11" height="8" viewBox="0 0 11 8"><path d="M1.2 1.5 L5.5 5.8 L9.8 1.5" fill="none" stroke="#050505" stroke-width="1.9"/></svg>
<div class="abs" style="left:1073px;top:443.49px;font-size:13.6px;line-height:1;font-weight:400;-webkit-text-stroke-width:0.42px;color:#050505;white-space:pre;">Media, files and links</div>
<svg class="abs" style="left:1384px;top:444.5px" width="11" height="8" viewBox="0 0 11 8"><path d="M1.2 1.5 L5.5 5.8 L9.8 1.5" fill="none" stroke="#050505" stroke-width="1.9"/></svg>
<div class="abs" style="left:1073px;top:482.99px;font-size:13.6px;line-height:1;font-weight:400;-webkit-text-stroke-width:0.42px;color:#050505;white-space:pre;">Privacy &amp; support</div>
<svg class="abs" style="left:1384px;top:484.0px" width="11" height="8" viewBox="0 0 11 8"><path d="M1.2 1.5 L5.5 5.8 L9.8 1.5" fill="none" stroke="#050505" stroke-width="1.9"/></svg>
<div id="taskbar" class="abs"></div>
<svg class="abs" style="left:16px;top:872px" width="16" height="16" viewBox="0 0 16 16"><g fill="#fff"><path d="M0 2.2 L6.6 1.3 V7.6 H0 Z"/><path d="M7.4 1.2 L16 0 V7.6 H7.4 Z"/><path d="M0 8.4 H6.6 V14.7 L0 13.8 Z"/><path d="M7.4 8.4 H16 V16 L7.4 14.8 Z"/></g></svg>
<div class="abs" style="left:48px;top:860px;width:288px;height:40px;background:#f3f3f3;border-top:1px solid #d8d8d8"></div>
<svg class="abs" style="left:59px;top:871px" width="18" height="18" viewBox="0 0 18 18"><circle cx="10.8" cy="7" r="5.6" fill="none" stroke="#1f1f1f" stroke-width="1.3"/><path d="M6.8 11 L1 16.8" stroke="#1f1f1f" stroke-width="1.4"/></svg>
<div class="abs" style="left:88px;top:873.84px;font-size:14.37px;line-height:1;font-weight:400;color:#2a2a2a;white-space:pre;">Type here to search</div>
<svg class="abs" style="left:262px;top:864px" width="66" height="30" viewBox="0 0 66 30"><path d="M26 3 C27.5 10 29 11.5 37 14 C29 16.5 27.5 18 26 27 C24.5 18 23 16.5 15 14 C23 11.5 24.5 10 26 3 Z" fill="#f7c21a"/><path d="M49 12 C49.8 15.5 50.5 16.2 54.5 17.5 C50.5 18.8 49.8 19.5 49 23.5 C48.2 19.5 47.5 18.8 43.5 17.5 C47.5 16.2 48.2 15.5 49 12 Z" fill="#f7c21a"/><path d="M7 17 C7.5 19.5 8 20 10.5 21 C8 22 7.5 22.5 7 25 C6.5 22.5 6 22 3.5 21 C6 20 6.5 19.5 7 17 Z" fill="#2f9bef"/><circle cx="42.5" cy="5.5" r="1.8" fill="#ef5a2a"/><circle cx="60.8" cy="25.8" r="1.8" fill="#7cc142"/></svg>
<svg class="abs" style="left:351px;top:871px" width="18" height="17" viewBox="0 0 18 17"><path d="M3 1 H13 M3 16 H13 M3 4 H13 V13 H3 Z M15.5 4 V7 M15.5 10 V13" fill="none" stroke="#fff" stroke-width="1.3"/></svg>
<svg class="abs" style="left:392px;top:866px" width="28" height="28" viewBox="0 0 28 28"><circle cx="13" cy="14" r="12" fill="#2ea043"/><path d="M13 2 A12 12 0 0 0 2.6 8 L7.8 17 L13 8 H23.4 A12 12 0 0 0 13 2 Z" fill="#e94235"/><path d="M23.4 8 A12 12 0 0 1 13 26 L18.2 17 A6 6 0 0 0 13 8 Z" fill="#fbbc04"/><circle cx="13" cy="14" r="5.4" fill="#fff"/><circle cx="13" cy="14" r="4.4" fill="#1a73e8"/><circle cx="20" cy="20.5" r="6.6" fill="#fff"/><circle cx="20" cy="20.5" r="5.6" fill="#4a9a4a"/><circle cx="20" cy="20.5" r="4.4" fill="none" stroke="#fff" stroke-width="0.9" opacity="0.85"/><circle cx="20" cy="18.9" r="1.5" fill="none" stroke="#fff" stroke-width="0.9"/><path d="M17.3 23.4 C17.9 21.8 22.1 21.8 22.7 23.4" fill="none" stroke="#fff" stroke-width="0.9"/></svg>
<div class="abs" style="left:390px;top:898px;width:30px;height:2px;background:#f6cf86"></div>
<svg class="abs" style="left:430px;top:866px" width="28" height="28" viewBox="0 0 28 28"><circle cx="13" cy="14" r="12" fill="#2ea043"/><path d="M13 2 A12 12 0 0 0 2.6 8 L7.8 17 L13 8 H23.4 A12 12 0 0 0 13 2 Z" fill="#e94235"/><path d="M23.4 8 A12 12 0 0 1 13 26 L18.2 17 A6 6 0 0 0 13 8 Z" fill="#fbbc04"/><circle cx="13" cy="14" r="5.4" fill="#fff"/><circle cx="13" cy="14" r="4.4" fill="#1a73e8"/><circle cx="20" cy="20.5" r="6.6" fill="#fff"/><circle cx="20" cy="20.5" r="5.6" fill="#2c5cc5"/><circle cx="20" cy="20.5" r="4.4" fill="none" stroke="#fff" stroke-width="0.9" opacity="0.85"/><circle cx="20" cy="18.9" r="1.5" fill="none" stroke="#fff" stroke-width="0.9"/><path d="M17.3 23.4 C17.9 21.8 22.1 21.8 22.7 23.4" fill="none" stroke="#fff" stroke-width="0.9"/></svg>
<div class="abs" style="left:428px;top:898px;width:30px;height:2px;background:#f6cf86"></div>
<svg class="abs" style="left:468px;top:866px" width="28" height="28" viewBox="0 0 28 28"><circle cx="13" cy="14" r="12" fill="#2ea043"/><path d="M13 2 A12 12 0 0 0 2.6 8 L7.8 17 L13 8 H23.4 A12 12 0 0 0 13 2 Z" fill="#e94235"/><path d="M23.4 8 A12 12 0 0 1 13 26 L18.2 17 A6 6 0 0 0 13 8 Z" fill="#fbbc04"/><circle cx="13" cy="14" r="5.4" fill="#fff"/><circle cx="13" cy="14" r="4.4" fill="#1a73e8"/><circle cx="20" cy="20.5" r="6.6" fill="#fff"/><circle cx="20" cy="20.5" r="5.6" fill="#5aa05a"/><circle cx="20" cy="20.5" r="4.4" fill="none" stroke="#fff" stroke-width="0.9" opacity="0.85"/><circle cx="20" cy="18.9" r="1.5" fill="none" stroke="#fff" stroke-width="0.9"/><path d="M17.3 23.4 C17.9 21.8 22.1 21.8 22.7 23.4" fill="none" stroke="#fff" stroke-width="0.9"/></svg>
<svg class="abs" style="left:506px;top:866px" width="28" height="28" viewBox="0 0 28 28"><circle cx="13" cy="14" r="12" fill="#2ea043"/><path d="M13 2 A12 12 0 0 0 2.6 8 L7.8 17 L13 8 H23.4 A12 12 0 0 0 13 2 Z" fill="#e94235"/><path d="M23.4 8 A12 12 0 0 1 13 26 L18.2 17 A6 6 0 0 0 13 8 Z" fill="#fbbc04"/><circle cx="13" cy="14" r="5.4" fill="#fff"/><circle cx="13" cy="14" r="4.4" fill="#1a73e8"/><circle cx="20" cy="20.5" r="6.6" fill="#fff"/><circle cx="20" cy="20.5" r="5.6" fill="#c8389a"/><circle cx="20" cy="20.5" r="4.4" fill="none" stroke="#fff" stroke-width="0.9" opacity="0.85"/><circle cx="20" cy="18.9" r="1.5" fill="none" stroke="#fff" stroke-width="0.9"/><path d="M17.3 23.4 C17.9 21.8 22.1 21.8 22.7 23.4" fill="none" stroke="#fff" stroke-width="0.9"/></svg>
<svg class="abs" style="left:544px;top:866px" width="28" height="28" viewBox="0 0 28 28"><circle cx="13" cy="14" r="12" fill="#2ea043"/><path d="M13 2 A12 12 0 0 0 2.6 8 L7.8 17 L13 8 H23.4 A12 12 0 0 0 13 2 Z" fill="#e94235"/><path d="M23.4 8 A12 12 0 0 1 13 26 L18.2 17 A6 6 0 0 0 13 8 Z" fill="#fbbc04"/><circle cx="13" cy="14" r="5.4" fill="#fff"/><circle cx="13" cy="14" r="4.4" fill="#1a73e8"/><circle cx="20" cy="20.5" r="6.6" fill="#fff"/><circle cx="20" cy="20.5" r="5.6" fill="#d07a38"/><circle cx="20" cy="20.5" r="4.4" fill="none" stroke="#fff" stroke-width="0.9" opacity="0.85"/><circle cx="20" cy="18.9" r="1.5" fill="none" stroke="#fff" stroke-width="0.9"/><path d="M17.3 23.4 C17.9 21.8 22.1 21.8 22.7 23.4" fill="none" stroke="#fff" stroke-width="0.9"/></svg>
<svg class="abs" style="left:582px;top:866px" width="28" height="28" viewBox="0 0 28 28"><circle cx="13" cy="14" r="12" fill="#2ea043"/><path d="M13 2 A12 12 0 0 0 2.6 8 L7.8 17 L13 8 H23.4 A12 12 0 0 0 13 2 Z" fill="#e94235"/><path d="M23.4 8 A12 12 0 0 1 13 26 L18.2 17 A6 6 0 0 0 13 8 Z" fill="#fbbc04"/><circle cx="13" cy="14" r="5.4" fill="#fff"/><circle cx="13" cy="14" r="4.4" fill="#1a73e8"/><circle cx="20" cy="20.5" r="6.6" fill="#fff"/><circle cx="20" cy="20.5" r="5.6" fill="#d65a2a"/><circle cx="20" cy="20.5" r="4.4" fill="none" stroke="#fff" stroke-width="0.9" opacity="0.85"/><circle cx="20" cy="18.9" r="1.5" fill="none" stroke="#fff" stroke-width="0.9"/><path d="M17.3 23.4 C17.9 21.8 22.1 21.8 22.7 23.4" fill="none" stroke="#fff" stroke-width="0.9"/></svg>
<svg class="abs" style="left:620px;top:866px" width="28" height="28" viewBox="0 0 28 28"><circle cx="13" cy="14" r="12" fill="#2ea043"/><path d="M13 2 A12 12 0 0 0 2.6 8 L7.8 17 L13 8 H23.4 A12 12 0 0 0 13 2 Z" fill="#e94235"/><path d="M23.4 8 A12 12 0 0 1 13 26 L18.2 17 A6 6 0 0 0 13 8 Z" fill="#fbbc04"/><circle cx="13" cy="14" r="5.4" fill="#fff"/><circle cx="13" cy="14" r="4.4" fill="#1a73e8"/><circle cx="20" cy="20.5" r="6.6" fill="#fff"/><circle cx="20" cy="20.5" r="5.6" fill="#3a6ad0"/><circle cx="20" cy="20.5" r="4.4" fill="none" stroke="#fff" stroke-width="0.9" opacity="0.85"/><circle cx="20" cy="18.9" r="1.5" fill="none" stroke="#fff" stroke-width="0.9"/><path d="M17.3 23.4 C17.9 21.8 22.1 21.8 22.7 23.4" fill="none" stroke="#fff" stroke-width="0.9"/></svg>
<svg class="abs" style="left:658px;top:866px" width="28" height="28" viewBox="0 0 28 28"><circle cx="13" cy="14" r="12" fill="#2ea043"/><path d="M13 2 A12 12 0 0 0 2.6 8 L7.8 17 L13 8 H23.4 A12 12 0 0 0 13 2 Z" fill="#e94235"/><path d="M23.4 8 A12 12 0 0 1 13 26 L18.2 17 A6 6 0 0 0 13 8 Z" fill="#fbbc04"/><circle cx="13" cy="14" r="5.4" fill="#fff"/><circle cx="13" cy="14" r="4.4" fill="#1a73e8"/><circle cx="20" cy="20.5" r="6.6" fill="#fff"/><circle cx="20" cy="20.5" r="5.6" fill="#cc2088"/><circle cx="20" cy="20.5" r="4.4" fill="none" stroke="#fff" stroke-width="0.9" opacity="0.85"/><circle cx="20" cy="18.9" r="1.5" fill="none" stroke="#fff" stroke-width="0.9"/><path d="M17.3 23.4 C17.9 21.8 22.1 21.8 22.7 23.4" fill="none" stroke="#fff" stroke-width="0.9"/></svg>
<div class="abs" style="left:656px;top:898px;width:30px;height:2px;background:#f6cf86"></div>
<svg class="abs" style="left:696px;top:866px" width="28" height="28" viewBox="0 0 28 28"><circle cx="13" cy="14" r="12" fill="#2ea043"/><path d="M13 2 A12 12 0 0 0 2.6 8 L7.8 17 L13 8 H23.4 A12 12 0 0 0 13 2 Z" fill="#e94235"/><path d="M23.4 8 A12 12 0 0 1 13 26 L18.2 17 A6 6 0 0 0 13 8 Z" fill="#fbbc04"/><circle cx="13" cy="14" r="5.4" fill="#fff"/><circle cx="13" cy="14" r="4.4" fill="#1a73e8"/><circle cx="20" cy="20.5" r="6.6" fill="#fff"/><circle cx="20" cy="20.5" r="5.6" fill="#4aa0b0"/><circle cx="20" cy="20.5" r="4.4" fill="none" stroke="#fff" stroke-width="0.9" opacity="0.85"/><circle cx="20" cy="18.9" r="1.5" fill="none" stroke="#fff" stroke-width="0.9"/><path d="M17.3 23.4 C17.9 21.8 22.1 21.8 22.7 23.4" fill="none" stroke="#fff" stroke-width="0.9"/></svg>
<svg class="abs" style="left:734px;top:866px" width="28" height="28" viewBox="0 0 28 28"><circle cx="13" cy="14" r="12" fill="#2ea043"/><path d="M13 2 A12 12 0 0 0 2.6 8 L7.8 17 L13 8 H23.4 A12 12 0 0 0 13 2 Z" fill="#e94235"/><path d="M23.4 8 A12 12 0 0 1 13 26 L18.2 17 A6 6 0 0 0 13 8 Z" fill="#fbbc04"/><circle cx="13" cy="14" r="5.4" fill="#fff"/><circle cx="13" cy="14" r="4.4" fill="#1a73e8"/><circle cx="20" cy="20.5" r="6.6" fill="#fff"/><circle cx="20" cy="20.5" r="5.6" fill="#9040c8"/><circle cx="20" cy="20.5" r="4.4" fill="none" stroke="#fff" stroke-width="0.9" opacity="0.85"/><circle cx="20" cy="18.9" r="1.5" fill="none" stroke="#fff" stroke-width="0.9"/><path d="M17.3 23.4 C17.9 21.8 22.1 21.8 22.7 23.4" fill="none" stroke="#fff" stroke-width="0.9"/></svg>
<svg class="abs" style="left:772px;top:866px" width="28" height="28" viewBox="0 0 28 28"><circle cx="13" cy="14" r="12" fill="#2ea043"/><path d="M13 2 A12 12 0 0 0 2.6 8 L7.8 17 L13 8 H23.4 A12 12 0 0 0 13 2 Z" fill="#e94235"/><path d="M23.4 8 A12 12 0 0 1 13 26 L18.2 17 A6 6 0 0 0 13 8 Z" fill="#fbbc04"/><circle cx="13" cy="14" r="5.4" fill="#fff"/><circle cx="13" cy="14" r="4.4" fill="#1a73e8"/><circle cx="20" cy="20.5" r="6.6" fill="#fff"/><circle cx="20" cy="20.5" r="5.6" fill="#9a9a5a"/><circle cx="20" cy="20.5" r="4.4" fill="none" stroke="#fff" stroke-width="0.9" opacity="0.85"/><circle cx="20" cy="18.9" r="1.5" fill="none" stroke="#fff" stroke-width="0.9"/><path d="M17.3 23.4 C17.9 21.8 22.1 21.8 22.7 23.4" fill="none" stroke="#fff" stroke-width="0.9"/></svg>
<svg class="abs" style="left:810px;top:866px" width="28" height="28" viewBox="0 0 28 28"><circle cx="13" cy="14" r="12" fill="#2ea043"/><path d="M13 2 A12 12 0 0 0 2.6 8 L7.8 17 L13 8 H23.4 A12 12 0 0 0 13 2 Z" fill="#e94235"/><path d="M23.4 8 A12 12 0 0 1 13 26 L18.2 17 A6 6 0 0 0 13 8 Z" fill="#fbbc04"/><circle cx="13" cy="14" r="5.4" fill="#fff"/><circle cx="13" cy="14" r="4.4" fill="#1a73e8"/><circle cx="20" cy="20.5" r="6.6" fill="#fff"/><circle cx="20" cy="20.5" r="5.6" fill="#9a9a5a"/><circle cx="20" cy="20.5" r="4.4" fill="none" stroke="#fff" stroke-width="0.9" opacity="0.85"/><circle cx="20" cy="18.9" r="1.5" fill="none" stroke="#fff" stroke-width="0.9"/><path d="M17.3 23.4 C17.9 21.8 22.1 21.8 22.7 23.4" fill="none" stroke="#fff" stroke-width="0.9"/></svg>
<svg class="abs" style="left:848px;top:866px" width="28" height="28" viewBox="0 0 28 28"><circle cx="13" cy="14" r="12" fill="#2ea043"/><path d="M13 2 A12 12 0 0 0 2.6 8 L7.8 17 L13 8 H23.4 A12 12 0 0 0 13 2 Z" fill="#e94235"/><path d="M23.4 8 A12 12 0 0 1 13 26 L18.2 17 A6 6 0 0 0 13 8 Z" fill="#fbbc04"/><circle cx="13" cy="14" r="5.4" fill="#fff"/><circle cx="13" cy="14" r="4.4" fill="#1a73e8"/><circle cx="20" cy="20.5" r="6.6" fill="#fff"/><circle cx="20" cy="20.5" r="5.6" fill="#2c5cc5"/><circle cx="20" cy="20.5" r="4.4" fill="none" stroke="#fff" stroke-width="0.9" opacity="0.85"/><circle cx="20" cy="18.9" r="1.5" fill="none" stroke="#fff" stroke-width="0.9"/><path d="M17.3 23.4 C17.9 21.8 22.1 21.8 22.7 23.4" fill="none" stroke="#fff" stroke-width="0.9"/></svg>
<div class="abs" style="left:846px;top:898px;width:30px;height:2px;background:#f6cf86"></div>
<div class="abs" style="left:881px;top:860px;width:37px;height:40px;background:#5a524c"></div>
<svg class="abs" style="left:886px;top:866px" width="28" height="28" viewBox="0 0 28 28"><circle cx="13" cy="14" r="12" fill="#2ea043"/><path d="M13 2 A12 12 0 0 0 2.6 8 L7.8 17 L13 8 H23.4 A12 12 0 0 0 13 2 Z" fill="#e94235"/><path d="M23.4 8 A12 12 0 0 1 13 26 L18.2 17 A6 6 0 0 0 13 8 Z" fill="#fbbc04"/><circle cx="13" cy="14" r="5.4" fill="#fff"/><circle cx="13" cy="14" r="4.4" fill="#1a73e8"/><circle cx="20" cy="20.5" r="6.6" fill="#fff"/><circle cx="20" cy="20.5" r="5.6" fill="#9a9a5a"/><circle cx="20" cy="20.5" r="4.4" fill="none" stroke="#fff" stroke-width="0.9" opacity="0.85"/><circle cx="20" cy="18.9" r="1.5" fill="none" stroke="#fff" stroke-width="0.9"/><path d="M17.3 23.4 C17.9 21.8 22.1 21.8 22.7 23.4" fill="none" stroke="#fff" stroke-width="0.9"/></svg>
<div class="abs" style="left:884px;top:898px;width:30px;height:2px;background:#f6cf86"></div>
<svg class="abs" style="left:924px;top:866px" width="28" height="28" viewBox="0 0 28 28"><circle cx="13" cy="14" r="12" fill="#2ea043"/><path d="M13 2 A12 12 0 0 0 2.6 8 L7.8 17 L13 8 H23.4 A12 12 0 0 0 13 2 Z" fill="#e94235"/><path d="M23.4 8 A12 12 0 0 1 13 26 L18.2 17 A6 6 0 0 0 13 8 Z" fill="#fbbc04"/><circle cx="13" cy="14" r="5.4" fill="#fff"/><circle cx="13" cy="14" r="4.4" fill="#1a73e8"/><circle cx="20" cy="20.5" r="6.6" fill="#fff"/><circle cx="20" cy="20.5" r="5.6" fill="#d65a2a"/><circle cx="20" cy="20.5" r="4.4" fill="none" stroke="#fff" stroke-width="0.9" opacity="0.85"/><circle cx="20" cy="18.9" r="1.5" fill="none" stroke="#fff" stroke-width="0.9"/><path d="M17.3 23.4 C17.9 21.8 22.1 21.8 22.7 23.4" fill="none" stroke="#fff" stroke-width="0.9"/></svg>
<div class="abs" style="left:922px;top:898px;width:30px;height:2px;background:#f6cf86"></div>
<svg class="abs" style="left:961px;top:866px" width="28" height="28" viewBox="0 0 28 28"><circle cx="13" cy="14" r="12" fill="#2ea043"/><path d="M13 2 A12 12 0 0 0 2.6 8 L7.8 17 L13 8 H23.4 A12 12 0 0 0 13 2 Z" fill="#e94235"/><path d="M23.4 8 A12 12 0 0 1 13 26 L18.2 17 A6 6 0 0 0 13 8 Z" fill="#fbbc04"/><circle cx="13" cy="14" r="5.4" fill="#fff"/><circle cx="13" cy="14" r="4.4" fill="#1a73e8"/><circle cx="20" cy="20.5" r="6.6" fill="#fff"/><circle cx="20" cy="20.5" r="5.6" fill="#9a9a5a"/><circle cx="20" cy="20.5" r="4.4" fill="none" stroke="#fff" stroke-width="0.9" opacity="0.85"/><circle cx="20" cy="18.9" r="1.5" fill="none" stroke="#fff" stroke-width="0.9"/><path d="M17.3 23.4 C17.9 21.8 22.1 21.8 22.7 23.4" fill="none" stroke="#fff" stroke-width="0.9"/></svg>
<div class="abs" style="left:959px;top:898px;width:30px;height:2px;background:#f6cf86"></div>
<svg class="abs" style="left:998px;top:866px" width="28" height="28" viewBox="0 0 28 28"><circle cx="13" cy="14" r="12" fill="#2ea043"/><path d="M13 2 A12 12 0 0 0 2.6 8 L7.8 17 L13 8 H23.4 A12 12 0 0 0 13 2 Z" fill="#e94235"/><path d="M23.4 8 A12 12 0 0 1 13 26 L18.2 17 A6 6 0 0 0 13 8 Z" fill="#fbbc04"/><circle cx="13" cy="14" r="5.4" fill="#fff"/><circle cx="13" cy="14" r="4.4" fill="#1a73e8"/><circle cx="20" cy="20.5" r="6.6" fill="#fff"/><circle cx="20" cy="20.5" r="5.6" fill="#d81e3a"/><circle cx="20" cy="20.5" r="4.4" fill="none" stroke="#fff" stroke-width="0.9" opacity="0.85"/><circle cx="20" cy="18.9" r="1.5" fill="none" stroke="#fff" stroke-width="0.9"/><path d="M17.3 23.4 C17.9 21.8 22.1 21.8 22.7 23.4" fill="none" stroke="#fff" stroke-width="0.9"/></svg>
<div class="abs" style="left:996px;top:898px;width:30px;height:2px;background:#f6cf86"></div>
<svg class="abs" style="left:1035px;top:866px" width="28" height="28" viewBox="0 0 28 28"><circle cx="13" cy="14" r="12" fill="#2ea043"/><path d="M13 2 A12 12 0 0 0 2.6 8 L7.8 17 L13 8 H23.4 A12 12 0 0 0 13 2 Z" fill="#e94235"/><path d="M23.4 8 A12 12 0 0 1 13 26 L18.2 17 A6 6 0 0 0 13 8 Z" fill="#fbbc04"/><circle cx="13" cy="14" r="5.4" fill="#fff"/><circle cx="13" cy="14" r="4.4" fill="#1a73e8"/><circle cx="20" cy="20.5" r="6.6" fill="#fff"/><circle cx="20" cy="20.5" r="5.6" fill="#d8501a"/><circle cx="20" cy="20.5" r="4.4" fill="none" stroke="#fff" stroke-width="0.9" opacity="0.85"/><circle cx="20" cy="18.9" r="1.5" fill="none" stroke="#fff" stroke-width="0.9"/><path d="M17.3 23.4 C17.9 21.8 22.1 21.8 22.7 23.4" fill="none" stroke="#fff" stroke-width="0.9"/></svg>
<div class="abs" style="left:1033px;top:898px;width:30px;height:2px;background:#f6cf86"></div>
<svg class="abs" style="left:1072px;top:866px" width="28" height="28" viewBox="0 0 28 28"><circle cx="13" cy="14" r="12" fill="#2ea043"/><path d="M13 2 A12 12 0 0 0 2.6 8 L7.8 17 L13 8 H23.4 A12 12 0 0 0 13 2 Z" fill="#e94235"/><path d="M23.4 8 A12 12 0 0 1 13 26 L18.2 17 A6 6 0 0 0 13 8 Z" fill="#fbbc04"/><circle cx="13" cy="14" r="5.4" fill="#fff"/><circle cx="13" cy="14" r="4.4" fill="#1a73e8"/><circle cx="20" cy="20.5" r="6.6" fill="#fff"/><circle cx="20" cy="20.5" r="5.6" fill="#5aaa5a"/><circle cx="20" cy="20.5" r="4.4" fill="none" stroke="#fff" stroke-width="0.9" opacity="0.85"/><circle cx="20" cy="18.9" r="1.5" fill="none" stroke="#fff" stroke-width="0.9"/><path d="M17.3 23.4 C17.9 21.8 22.1 21.8 22.7 23.4" fill="none" stroke="#fff" stroke-width="0.9"/></svg>
<div class="abs" style="left:1107px;top:860px;width:16px;height:40px;background:#efefef"></div>
<svg class="abs" style="left:1108px;top:864px" width="14" height="32" viewBox="0 0 14 32"><path d="M3 7.5 L7 3.5 L11 7.5 M3 25 L7 29 L11 25" fill="none" stroke="#444" stroke-width="1.3"/></svg>
<svg class="abs" style="left:1138px;top:868px" width="24" height="24" viewBox="0 0 24 24"><ellipse cx="11" cy="4" rx="8" ry="2.8" fill="#f6a81c"/><path d="M3 4 V6 C3 7.6 6.6 8.8 11 8.8 C15.4 8.8 19 7.6 19 6 V4 C19 5.6 15.4 6.8 11 6.8 C6.6 6.8 3 5.6 3 4 Z" fill="#e08a10"/><ellipse cx="13" cy="10.5" rx="9" ry="3" fill="#f6a81c"/><path d="M4 10.5 V12.8 C4 14.4 8 15.6 13 15.6 C18 15.6 22 14.4 22 12.8 V10.5 C22 12.1 18 13.4 13 13.4 C8 13.4 4 12.1 4 10.5 Z" fill="#e08a10"/><ellipse cx="10.5" cy="16.5" rx="8" ry="2.8" fill="#f6a81c"/><path d="M2.5 16.5 V18.5 C2.5 20 6 21.2 10.5 21.2 C15 21.2 18.5 20 18.5 18.5 V16.5 C18.5 18 15 19.2 10.5 19.2 C6 19.2 2.5 18 2.5 16.5 Z" fill="#e08a10"/><path d="M7.5 21 L10 23.6 L12.5 21" fill="none" stroke="#e0502a" stroke-width="1.8"/></svg>
<div class="abs" style="left:1170px;top:875.06px;font-size:12.33px;line-height:1;font-weight:400;color:#ffffff;white-space:pre;">USD...</div>
<svg class="abs" style="left:1231px;top:873px" width="15" height="12" viewBox="0 0 15 12"><path d="M1.5 9.5 L7.5 3.5 L13.5 9.5" fill="none" stroke="#fff" stroke-width="1.3"/></svg>
<svg class="abs" style="left:1257px;top:871px" width="13" height="18" viewBox="0 0 13 18"><path d="M2 2.5 C0.8 3.5 0.8 14.5 2 15.5 M2 15.5 Q5 16.8 7.5 15.5" fill="none" stroke="#fff" stroke-width="1.1"/><path d="M2 2.5 Q5 1.2 7.5 2.5" fill="none" stroke="#fff" stroke-width="1.1"/><rect x="1.8" y="5.5" width="6.5" height="7" rx="1.5" fill="none" stroke="#fff" stroke-width="1.1"/><path d="M8.5 8 L12 6 V12 L8.5 10" fill="none" stroke="#fff" stroke-width="1.1"/></svg>
<svg class="abs" style="left:1279px;top:870px" width="18" height="18" viewBox="0 0 18 18"><rect x="3" y="3" width="14" height="10" fill="none" stroke="#fff" stroke-width="1.1"/><path d="M10 13 V16 M6.5 16.5 H13.5" stroke="#fff" stroke-width="1.1"/><rect x="0.6" y="1" width="4.5" height="4.5" fill="#2c2624" stroke="#fff" stroke-width="1"/><path d="M1.8 3.4 L2.8 4.3 L4.2 2.2" stroke="#fff" stroke-width="0.8" fill="none"/></svg>
<svg class="abs" style="left:1302px;top:871px" width="18" height="17" viewBox="0 0 18 17"><path d="M1 6 H4 L8 2.5 V14.5 L4 11 H1 Z" fill="none" stroke="#fff" stroke-width="1.1"/><path d="M10.5 6 C11.5 7.5 11.5 9.5 10.5 11 M12.8 4 C14.6 6.5 14.6 10.5 12.8 13 M15 2 C17.6 5.5 17.6 11.5 15 15" fill="none" stroke="#fff" stroke-width="1.1"/></svg>
<div class="abs" style="left:1334px;top:865.45px;font-size:11.28px;line-height:1;font-weight:400;color:#ffffff;white-space:pre;">6:40 PM</div>
<div class="abs" style="left:1327px;top:883.51px;font-size:11.21px;line-height:1;font-weight:400;color:#ffffff;white-space:pre;">10/23/2025</div>
<div class="abs" style="left:1387px;top:860px;width:40px;height:40px;background:#383230"></div>
<svg class="abs" style="left:1398px;top:871px" width="18" height="18" viewBox="0 0 18 18"><path d="M1 1.5 H17 V13.5 H10.5 L8 16.5 L5.5 13.5 H1 Z" fill="none" stroke="#fff" stroke-width="1.1"/></svg>
<div class="abs" style="left:1434px;top:860px;width:1px;height:40px;background:#6a625c"></div>
</body></html>
